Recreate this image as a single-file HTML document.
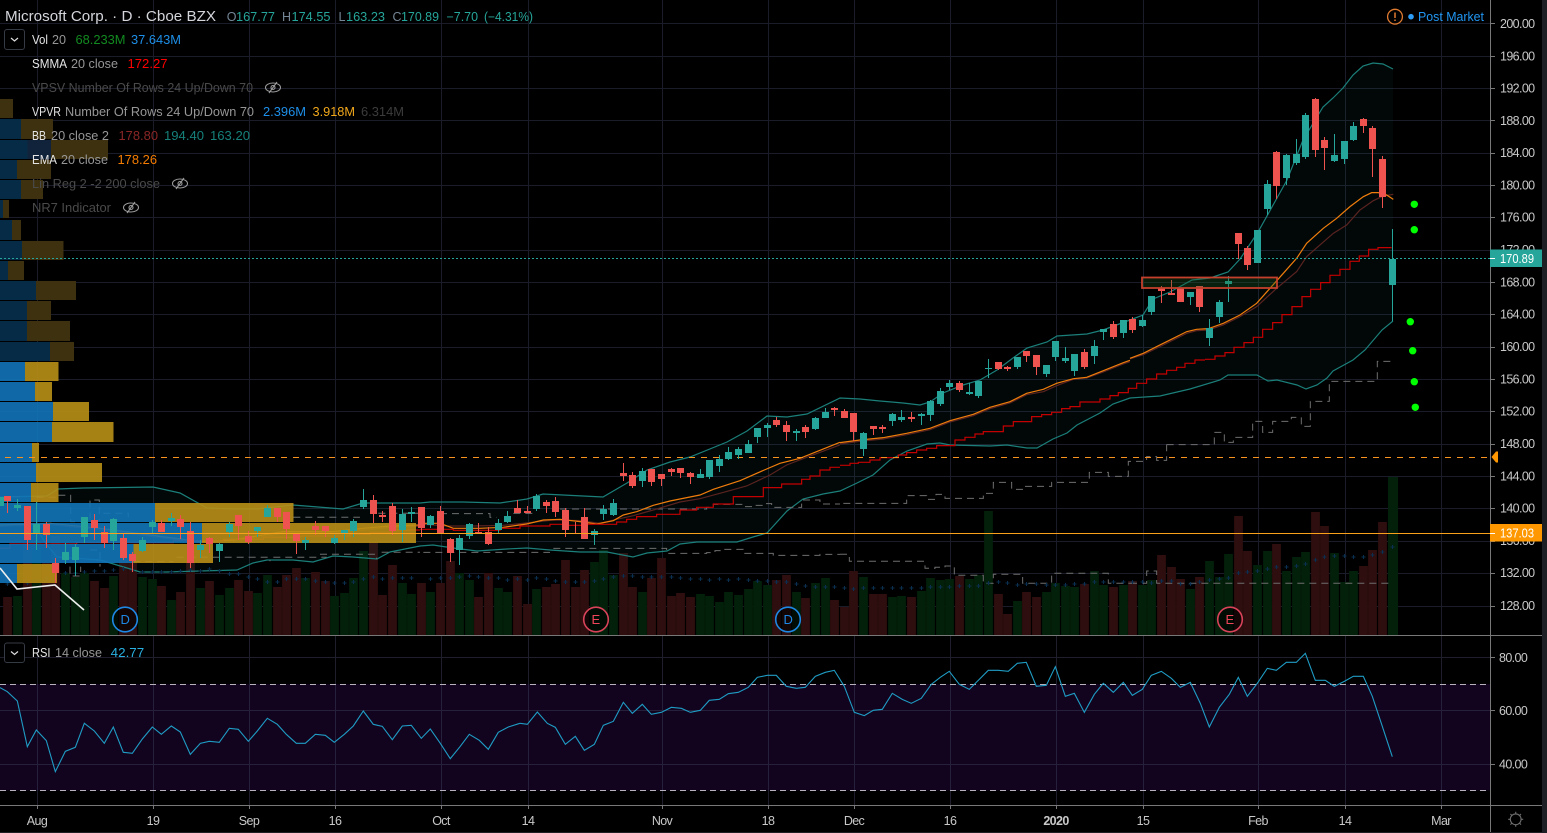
<!DOCTYPE html>
<html><head><meta charset="utf-8"><title>MSFT chart</title>
<style>
html,body{margin:0;padding:0;background:#000;width:1547px;height:833px;overflow:hidden}
svg{display:block}
text{font-family:"Liberation Sans","DejaVu Sans",sans-serif;font-size:12.5px}
.n{vector-effect:non-scaling-stroke;fill:none}
.ax text{fill:#c8c8c8;font-size:12.5px;letter-spacing:-.62px}
</style></head><body>
<svg width="1547" height="833" viewBox="0 0 1547 833" xmlns="http://www.w3.org/2000/svg">
<defs>
<marker id="p" markerUnits="userSpaceOnUse" markerWidth="6" markerHeight="6" refX="3" refY="3"><path d="M1 3H5M3 1V5" stroke="#0a2f50" stroke-width="1" fill="none"/></marker>
</defs>
<rect width="1547" height="833" fill="#000"/>
<!-- grid -->
<path stroke="#1a1c29" stroke-width="1" fill="none" d="M0 23.5H1490M0 56.5H1490M0 88.5H1490M0 120.5H1490M0 153.5H1490M0 185.5H1490M0 217.5H1490M0 250.5H1490M0 282.5H1490M0 314.5H1490M0 347.5H1490M0 379.5H1490M0 411.5H1490M0 444.5H1490M0 476.5H1490M0 508.5H1490M0 541.5H1490M0 573.5H1490M0 606.5H1490M37.5 0V635M153.5 0V635M249.5 0V635M335.5 0V635M441.5 0V635M528.5 0V635M662.5 0V635M768.5 0V635M854.5 0V635M950.5 0V635M1056.5 0V635M1143.5 0V635M1258.5 0V635M1345.5 0V635M1441.5 0V635"/>
<!-- volume -->
<path stroke="#2e0e0e" stroke-width="8.8" fill="none" d="M7.5 597V635M27.5 543V635M46.5 563V635M55.5 536V635M94.5 581V635M104.5 588V635M123.5 560V635M132.5 562V635M161.5 586V635M180.5 592V635M190.5 560V635M209.5 581V635M238.5 580V635M248.5 591V635M277.5 587V635M286.5 575V635M296.5 568V635M315.5 572V635M325.5 581V635M373.5 542V635M382.5 595V635M392.5 565V635M421.5 583V635M440.5 583V635M450.5 561V635M478.5 597V635M488.5 573V635M517.5 576V635M527.5 604V635M546.5 587V635M555.5 584V635M565.5 560V635M575.5 587V635M584.5 570V635M623.5 553V635M632.5 587V635M651.5 578V635M661.5 558V635M671.5 596V635M680.5 593V635M690.5 597V635M776.5 580V635M786.5 575V635M805.5 598V635M834.5 600V635M844.5 607V635M853.5 571V635M873.5 594V635M882.5 594V635M911.5 597V635M959.5 576V635M998.5 594V635M1007.5 614V635M1026.5 592V635M1036.5 597V635M1084.5 584V635M1113.5 587V635M1132.5 581V635M1161.5 555V635M1171.5 567V635M1180.5 579V635M1199.5 577V635M1238.5 516V635M1247.5 551V635M1276.5 544V635M1315.5 512V635M1324.5 526V635M1363.5 566V635M1372.5 550V635M1382.5 522V635"/>
<path stroke="#03200a" stroke-width="8.8" fill="none" d="M17.5 596V635M36.5 542V635M65.5 573V635M75.5 577V635M84.5 573V635M113.5 576V635M142.5 577V635M152.5 579V635M171.5 600V635M200.5 588V635M219.5 595V635M229.5 588V635M257.5 593V635M267.5 575V635M305.5 578V635M334.5 596V635M344.5 593V635M353.5 578V635M363.5 551V635M402.5 583V635M411.5 594V635M430.5 592V635M459.5 573V635M469.5 580V635M498.5 588V635M507.5 592V635M536.5 589V635M594.5 562V635M603.5 550V635M613.5 575V635M642.5 592V635M700.5 594V635M709.5 596V635M719.5 602V635M728.5 592V635M738.5 595V635M748.5 589V635M757.5 581V635M767.5 585V635M796.5 592V635M815.5 583V635M825.5 578V635M863.5 577V635M892.5 597V635M901.5 596V635M921.5 591V635M930.5 578V635M940.5 580V635M949.5 579V635M969.5 579V635M978.5 575V635M988.5 511V635M1017.5 601V635M1046.5 592V635M1055.5 583V635M1065.5 586V635M1074.5 587V635M1094.5 571V635M1103.5 585V635M1123.5 585V635M1142.5 585V635M1151.5 580V635M1190.5 589V635M1209.5 561V635M1219.5 577V635M1228.5 554V635M1257.5 565V635M1267.5 551V635M1286.5 571V635M1296.5 557V635M1305.5 552V635M1334.5 553V635M1344.5 582V635M1353.5 571V635"/>
<rect x="1388" y="477" width="10" height="158" fill="#03200a"/>
<!-- BB fill -->
<polygon fill="#26a69a" fill-opacity=".05" points="0,497 47,496 58,489 83,488 153,487 180,493 207,508 233,509 257,509 293,505 343,509 363,503 420,503 430,502 450,502 463,502 500,503 527,499 543,494 563,495 603,497 627,483 647,470 670,462 690,457 727,442 747,431 767,416 787,417 807,414 840,398 860,399 880,401 903,403 920,405 930,402 943,393 963,385 980,380 997,370 1013,358 1027,348 1047,342 1057,336 1087,334 1103,330 1130,320 1143,315 1153,299 1170,292 1192,280 1210,278 1228,272 1240,259 1258,232 1277,198 1287,180 1303,140 1323,107 1333,98 1343,88 1353,75 1363,66 1373,63 1383,64 1393,69 1393,321 1382,330 1365,350 1353,360 1333,371 1327,378 1317,385 1306,389 1297,385 1277,380 1268,381 1257,375 1228,375 1220,380 1190,389 1160,396 1130,398 1113,404 1100,413 1077,425 1067,433 1053,439 1037,448 1027,448 1007,445 990,446 950,445 940,443 927,444 907,451 890,460 873,475 857,483 840,491 823,494 803,499 787,511 767,533 753,537 737,542 697,542 680,544 667,551 647,553 633,557 607,552 580,552 550,550 527,548 507,549 477,551 453,548 433,545 420,546 390,552 377,559 353,557 333,556 313,562 293,560 267,560 253,563 237,570 200,571 167,572 140,572 127,568 100,560 57,557 47,545 33,524 0,525"/>
<!-- BB lines -->
<g fill="none" stroke="#1b7f7a" stroke-width="1.2">
<polyline points="0,497 47,496 58,489 83,488 153,487 180,493 207,508 233,509 257,509 293,505 343,509 363,503 420,503 430,502 450,502 463,502 500,503 527,499 543,494 563,495 603,497 627,483 647,470 670,462 690,457 727,442 747,431 767,416 787,417 807,414 840,398 860,399 880,401 903,403 920,405 930,402 943,393 963,385 980,380 997,370 1013,358 1027,348 1047,342 1057,336 1087,334 1103,330 1130,320 1143,315 1153,299 1170,292 1192,280 1210,278 1228,272 1240,259 1258,232 1277,198 1287,180 1303,140 1323,107 1333,98 1343,88 1353,75 1363,66 1373,63 1383,64 1393,69"/>
<polyline points="1393,321 1382,330 1365,350 1353,360 1333,371 1327,378 1317,385 1306,389 1297,385 1277,380 1268,381 1257,375 1228,375 1220,380 1190,389 1160,396 1130,398 1113,404 1100,413 1077,425 1067,433 1053,439 1037,448 1027,448 1007,445 990,446 950,445 940,443 927,444 907,451 890,460 873,475 857,483 840,491 823,494 803,499 787,511 767,533 753,537 737,542 697,542 680,544 667,551 647,553 633,557 607,552 580,552 550,550 527,548 507,549 477,551 453,548 433,545 420,546 390,552 377,559 353,557 333,556 313,562 293,560 267,560 253,563 237,570 200,571 167,572 140,572 127,568 100,560 57,557 47,545 33,524 0,525"/>
</g>
<!-- grey stepped -->
<g stroke="#6e6e6e" stroke-width="1" stroke-dasharray="7 5" fill="none">
<path class="n" transform="translate(0,220) scale(.3333)" d="M40 830H70M110 832H170M175 826H212V905H270V840H298V905M310 880H385V892M880 892H1080M1135 880H1260M270 990H300V1040M210 1040V1068H242V1040M960 1003H1130V1017M1145 997H1260M530 1012H810V1024M820 1012H980M400 1025H520"/>
<path class="n" transform="translate(420,400) scale(.3333)" d="M60 341H210V352H230M280 340H345M420 327H860V322H880V313H970V320H1000V316H1030V311H1055V322H1145V300H1200V312H1260M10 457H390M400 445H740V460H860V458H885V452H910V448H970V460H1060V466H1200V463H1260"/>
<path class="n" transform="translate(840,300) scale(.3333)" d="M10 610H200V587H260V598H288V583H315V595H430V580H460V547H515V568H550V559H635V547H748V517H805V529H865V484H920V470H950V481H980V433M0 763H28V784H255V805H285V802H315V798H343V826H430V850H460V823H548V850H635V820H805V850H870"/>
<path class="n" transform="translate(1130,350) scale(.3333)" d="M110 284H253V247H283V277H310V262H368V214H398V247H428V214H484V202H514V229H541V154H598V94H742V34H790M0 700H50V663H80V700H790"/>
</g>
<!-- basis -->
<g stroke="#5a2320" stroke-width="1.2" fill="none">
<polyline class="n" transform="translate(0,220) scale(.3333)" points="0,919 150,914 300,929 450,949 600,968 700,964 790,950 850,939 1000,939 1090,930 1170,922 1260,919"/>
<polyline class="n" transform="translate(420,400) scale(.3333)" points="0,372 80,378 160,378 250,376 330,368 400,360 480,362 540,370 590,358 640,347 700,330 780,306 840,296 900,280 980,258 1050,225 1100,195 1160,172 1260,135"/>
<polyline class="n" transform="translate(840,300) scale(.3333)" points="0,432 60,424 130,417 200,404 270,389 330,366 400,347 450,326 510,309 560,284 610,275 650,257 700,238 740,234 790,216 850,192 870,185"/>
<polyline class="n" transform="translate(1130,60) scale(.3333)" points="0,897 40,884 90,860 130,840 170,820 200,812 235,810 280,795 330,770 380,740 440,685 500,635 530,590 570,555 610,520 650,495 690,450 730,422 760,408 790,403"/>
</g>
<!-- EMA -->
<g stroke="#ef7d0c" stroke-width="1.2" fill="none">
<polyline class="n" transform="translate(0,220) scale(.3333)" points="0,915 150,910 300,925 450,945 600,965 700,960 790,945 850,935 1000,935 1090,925 1170,918 1260,915"/>
<polyline class="n" transform="translate(420,400) scale(.3333)" points="0,370 60,370 100,385 180,385 250,382 320,372 370,360 420,358 480,365 530,372 580,362 610,345 650,335 700,316 750,303 840,285 880,268 960,242 1040,207 1080,190 1140,175 1260,127"/>
<polyline class="n" transform="translate(840,300) scale(.3333)" points="0,428 60,420 130,413 200,400 270,385 330,362 400,343 450,322 510,305 560,280 610,268 650,250 700,236 740,232 790,212 850,188 870,181"/>
<polyline class="n" transform="translate(1130,60) scale(.3333)" points="0,895 40,880 90,855 130,835 170,815 200,808 235,806 280,790 330,765 380,730 420,685 460,640 500,595 530,550 580,505 620,475 660,440 700,410 725,398 745,398 770,405 790,418"/>
</g>
<!-- SMMA -->
<g stroke="#c40000" stroke-width="1.2" fill="none">
<path class="n" transform="translate(0,220) scale(.3333)" d="M0 985H30V972H230V968H520V962H670V958H790V952H900V948H1050V943H1110V937H1175V930H1260"/>
<path class="n" transform="translate(420,400) scale(.3333)" d="M0 388H100V391H240V385H300V378H390V373H440V376H500V373H590V366H620V358H650V350H710V343H780V330H830V322H880V312H940V290H1030V263H1085V252H1145V238H1170V228H1200V210H1230V202H1260"/>
<path class="n" transform="translate(840,300) scale(.3333)" d="M0 496H30V490H55V487H90V480H120V473H175V465H200V458H230V450H260V445H290V437H345V420H375V412H405V402H430V395H490V378H520V365H575V350H605V344H635V337H665V326H690V320H720V306H780V297H810V287H835V278H865V265H890V250H920V237H950V222H980V211H1010V202H1035V190H1065V180H1095"/>
<path class="n" transform="translate(1130,60) scale(.3333)" d="M225 898H255V888H285V878H312V862H342V848H370V832H398V808H428V788H456V764H486V740H516V710H542V688H572V668H600V646H630V628H660V604H688V588H716V568H744V563H785"/>
</g>
<!-- Vol MA crosses -->
<polyline fill="none" stroke="none" marker-start="url(#p)" marker-mid="url(#p)" marker-end="url(#p)" points="7.5,584 27.5,583 46.5,578 65.5,573 75.5,573 84.5,572 94.5,571 104.5,571 113.5,570 123.5,569 132.5,570 142.5,572 152.5,572 161.5,572 171.5,572 180.5,571 190.5,570 200.5,571 209.5,569 219.5,571 229.5,574 238.5,574 248.5,577 257.5,579 267.5,582 277.5,582 286.5,579 296.5,579 305.5,579 315.5,581 325.5,582 334.5,583 344.5,583 353.5,582 363.5,579 373.5,577 382.5,579 392.5,578 402.5,578 411.5,578 430.5,579 440.5,578 450.5,578 459.5,577 469.5,576 478.5,577 488.5,578 498.5,578 507.5,580 517.5,579 527.5,580 536.5,578 546.5,579 555.5,581 565.5,582 575.5,582 584.5,582 594.5,581 603.5,579 613.5,577 623.5,576 632.5,576 642.5,577 651.5,577 661.5,577 671.5,577 680.5,578 690.5,579 700.5,579 709.5,580 719.5,579 728.5,580 738.5,579 748.5,580 757.5,581 767.5,581 776.5,582 786.5,582 796.5,584 805.5,586 815.5,587 825.5,587 834.5,587 844.5,588 853.5,589 863.5,588 873.5,588 882.5,588 892.5,588 901.5,588 911.5,588 921.5,588 930.5,587 940.5,587 949.5,587 959.5,586 969.5,586 978.5,586 988.5,583 998.5,582 1007.5,583 1017.5,585 1026.5,584 1036.5,584 1046.5,585 1055.5,585 1065.5,585 1074.5,584 1084.5,584 1094.5,582 1103.5,582 1113.5,582 1123.5,582 1132.5,582 1142.5,582 1151.5,583 1161.5,581 1171.5,581 1180.5,584 1190.5,584 1199.5,582 1209.5,580 1219.5,579 1228.5,578 1238.5,573 1247.5,572 1257.5,571 1267.5,569 1276.5,567 1286.5,567 1296.5,566 1305.5,564 1315.5,560 1324.5,557 1334.5,556 1344.5,556 1353.5,557 1363.5,557 1372.5,555 1382.5,552 1392.5,547"/>
<!-- VPVR dim -->
<g fill="#3e3110">
<rect x="0" y="99" width="13" height="19"/><rect x="21" y="119" width="32" height="20"/><rect x="51" y="140" width="57" height="19"/><rect x="17" y="160" width="34" height="19"/><rect x="21" y="180" width="22" height="19"/><rect x="3" y="200" width="6" height="18"/><rect x="12" y="220" width="9" height="20"/><rect x="22" y="241" width="41.5" height="19"/><rect x="8" y="261" width="16" height="19"/><rect x="36" y="281" width="40" height="19"/><rect x="27" y="301" width="24" height="19"/><rect x="27" y="321" width="43" height="20"/><rect x="50" y="342" width="24" height="19"/>
</g>
<g fill="#062b47">
<rect y="119" width="21" height="20"/><rect y="140" width="27.5" height="19"/><rect y="160" width="17" height="19"/><rect y="180" width="21" height="19"/><rect y="200" width="3" height="18"/><rect y="220" width="12" height="20"/><rect y="241" width="22" height="19"/><rect y="261" width="8" height="19"/><rect y="281" width="36" height="19"/><rect y="301" width="27" height="19"/><rect y="321" width="27" height="20"/><rect y="342" width="50" height="19"/>
</g>
<rect x="27.5" y="140" width="23.5" height="19" fill="#11233a"/>
<!-- VPVR bright -->
<g opacity=".9">
<g fill="#b98f17">
<rect x="25" y="362" width="33.5" height="19"/><rect x="35" y="382" width="17" height="19"/><rect x="53" y="402" width="36" height="19"/><rect x="52" y="422" width="61.5" height="20"/><rect x="32" y="443" width="7" height="19"/><rect x="36" y="463" width="66" height="19"/><rect x="31" y="483" width="27.5" height="19"/><rect x="155" y="503" width="138.5" height="19"/><rect x="202" y="523" width="214" height="20"/><rect x="133.5" y="544" width="79.5" height="19"/><rect x="17" y="564" width="40" height="19"/>
</g>
<g fill="#1275b8">
<rect y="362" width="25" height="19"/><rect y="382" width="35" height="19"/><rect y="402" width="53" height="19"/><rect y="422" width="52" height="20"/><rect y="443" width="32" height="19"/><rect y="463" width="36" height="19"/><rect y="483" width="31" height="19"/><rect y="503" width="155" height="19"/><rect y="523" width="202" height="20"/><rect y="544" width="133.5" height="19"/><rect y="564" width="17" height="19"/>
</g>
</g>
<!-- horizontal levels -->
<line x1="0" x2="1490" y1="258.5" y2="258.5" stroke="#26a69a" stroke-dasharray="2 2"/>
<line x1="5" x2="1490" y1="457.5" y2="457.5" stroke="#f7931e" stroke-dasharray="6 6"/>
<!-- candle wicks -->
<path stroke="#ef5350" stroke-width="1" fill="none" d="M7.5 496V513M27.5 506V550M46.5 522V548M55.5 558V583M94.5 514V540M104.5 526V548M123.5 533V560M132.5 552V572M161.5 520V532M180.5 515V539M190.5 522V568M209.5 537V553M238.5 515V540M248.5 531V544M277.5 508V522M286.5 512V539M296.5 534V554M315.5 521V535M325.5 526V537M373.5 495V523M382.5 511V522M392.5 503V535M421.5 507V537M440.5 506V533M450.5 538V562M478.5 523V534M488.5 527V545M517.5 500V513M527.5 506V513M546.5 500V513M555.5 497V517M565.5 508V537M575.5 522V533M584.5 508V539M623.5 463V481M632.5 472V488M651.5 469V486M661.5 474V486M671.5 468V476M680.5 468V478M690.5 472V484M776.5 417V427M786.5 421V441M805.5 425V438M834.5 407V416M844.5 409V418M853.5 413V441M873.5 426V435M882.5 425V433M911.5 412V422M959.5 381V392M998.5 362V370M1007.5 366V371M1026.5 351V362M1036.5 355V375M1084.5 349V369M1113.5 321V339M1132.5 317V333M1161.5 286V303M1171.5 280V295M1180.5 288V302M1199.5 286V312M1238.5 233V259M1247.5 246V270M1276.5 151V199M1315.5 98V157M1324.5 137V170M1363.5 118V133M1372.5 126V177M1382.5 156V208"/>
<path stroke="#26a69a" stroke-width="1" fill="none" d="M17.5 499V511M36.5 502V550M65.5 543V564M75.5 544V576M84.5 517V543M113.5 518V550M142.5 537V552M152.5 520V534M171.5 513V526M200.5 540V558M219.5 543V562M229.5 522V537M257.5 527V537M267.5 505V517M305.5 537V550M334.5 535V544M344.5 530V540M353.5 519V537M363.5 489V509M402.5 509V542M411.5 507V522M430.5 515V528M459.5 535V565M469.5 523V539M498.5 519V534M507.5 511V523M536.5 494V511M594.5 529V545M603.5 505V520M613.5 499V516M642.5 468V487M700.5 469V478M709.5 460V479M719.5 455V472M728.5 447V460M738.5 447V459M748.5 440V453M757.5 428V443M767.5 423V437M796.5 429V441M815.5 417V430M825.5 408V418M863.5 432V456M892.5 413V426M901.5 410V422M921.5 413V425M930.5 400V421M940.5 388V406M949.5 380V390M969.5 383V395M978.5 381V398M988.5 359V378M1017.5 357V369M1046.5 365V377M1055.5 341V361M1065.5 347V363M1074.5 354V376M1094.5 340V364M1103.5 329V340M1123.5 320V338M1142.5 315V327M1151.5 296V315M1190.5 292V305M1209.5 319V346M1219.5 300V323M1228.5 276V302M1257.5 230V263M1267.5 180V215M1286.5 154V185M1296.5 139V165M1305.5 113V159M1334.5 134V162M1344.5 141V164M1353.5 122V141M1392.5 229V321"/>
<!-- candle bodies -->
<path stroke="#ef5350" stroke-width="7" fill="none" d="M7.5 496V501M27.5 506V540M46.5 524V535M55.5 563V573M94.5 520V528M104.5 532V543M123.5 538V558M132.5 554V561M161.5 523V532M180.5 519V527M190.5 531V563M209.5 538V544M238.5 515V526M248.5 536V542M277.5 508V517M286.5 512V529M296.5 534V541M315.5 526V530M325.5 526V531M373.5 500V514M382.5 515V517M392.5 506V531M421.5 507V528M440.5 511V533M450.5 539V553M478.5 532V534M488.5 532V544M517.5 508V513M527.5 511V513M546.5 502V506M555.5 501V512M565.5 510V530M584.5 517V539M623.5 473V476M632.5 475V486M651.5 469V482M661.5 474V479M671.5 469V472M680.5 468V473M690.5 473V477M776.5 420V425M786.5 425V432M805.5 427V432M834.5 408V410M844.5 411V418M853.5 413V432M873.5 426V429M882.5 427V429M911.5 417V419M959.5 383V390M998.5 362V369M1007.5 367V369M1026.5 351V356M1036.5 355V367M1084.5 352V367M1113.5 324V337M1132.5 319V330M1161.5 288V291M1171.5 293V295M1180.5 288V302M1199.5 286V307M1238.5 233V244M1247.5 248V265M1276.5 152V186M1315.5 99V150M1324.5 140V148M1363.5 119V126M1372.5 128V149M1382.5 159V197"/>
<path stroke="#26a69a" stroke-width="7" fill="none" d="M.5 497V506M17.5 505V508M36.5 524V534M65.5 552V560M75.5 547V560M84.5 517V537M113.5 519V541M142.5 540V551M152.5 522V527M171.5 518V521M200.5 545V550M219.5 544V551M229.5 524V532M257.5 527V531M267.5 508V517M305.5 540V543M334.5 538V543M344.5 530V534M353.5 521V531M363.5 500V507M402.5 514V530M411.5 512V514M430.5 516V525M459.5 538V550M469.5 524V536M498.5 523V530M507.5 516V522M536.5 496V509M594.5 531V535M603.5 509V514M613.5 503V515M642.5 471V481M700.5 474V478M709.5 460V477M719.5 459V466M728.5 452V459M738.5 449V455M748.5 444V453M757.5 428V437M767.5 425V428M796.5 431V433M815.5 418V429M825.5 412V418M863.5 433V449M892.5 414V421M901.5 417V420M921.5 414V416M930.5 401V415M940.5 391V404M949.5 383V387M969.5 392V394M978.5 381V396M988.5 368V369M1017.5 357V367M1046.5 365V374M1055.5 341V357M1065.5 358V361M1074.5 354V371M1094.5 346V356M1103.5 329V332M1123.5 320V333M1142.5 320V326M1151.5 296V312M1190.5 292V297M1209.5 328V338M1219.5 302V317M1228.5 281V284M1257.5 230V263M1267.5 184V209M1286.5 155V178M1296.5 154V163M1305.5 115V157M1334.5 155V161M1344.5 141V159M1353.5 126V140M1392.5 259V285"/>
<!-- orange line -->
<line x1="0" x2="1490" y1="533.5" y2="533.5" stroke="#f9a11b" stroke-width="1"/>
<!-- white line -->
<polyline points="0,568 17,589 55,585 84,610" fill="none" stroke="#eee" stroke-width="1.6"/>
<!-- rectangle -->
<rect x="1142" y="277.5" width="135" height="10.5" fill="#1e5a1e" fill-opacity=".3" stroke="#c4402c" stroke-width="1.8"/>
<!-- dots -->
<g fill="#00ff00"><circle cx="1414.3" cy="204.3" r="3.7"/><circle cx="1414.3" cy="229.7" r="3.7"/><circle cx="1410.3" cy="321.7" r="3.7"/><circle cx="1412.7" cy="350.7" r="3.7"/><circle cx="1414.3" cy="381.7" r="3.7"/><circle cx="1415.3" cy="407.3" r="3.7"/></g>
<!-- earnings/dividend -->
<g fill="#00000099" stroke-width="1.6">
<circle cx="125" cy="619.5" r="12.3" stroke="#1e88e5"/><circle cx="596" cy="619.5" r="12.3" stroke="#d9435a"/><circle cx="788" cy="619.5" r="12.3" stroke="#1e88e5"/><circle cx="1230" cy="619.5" r="12.3" stroke="#d9435a"/>
</g>
<g><text x="120.5" y="624" fill="#1e88e5" style="font-size:13px">D</text><text x="591.5" y="624" fill="#f0445a" style="font-size:13px">E</text><text x="783.5" y="624" fill="#1e88e5" style="font-size:13px">D</text><text x="1225.5" y="624" fill="#f0445a" style="font-size:13px">E</text></g>
<!-- legend -->
<text x="5" y="21" fill="#d4d6dc" style="font-size:15px" textLength="211" lengthAdjust="spacingAndGlyphs">Microsoft Corp. · D · Cboe BZX</text>
<g>
<text x="226.8" y="21" fill="#758696">O</text><text x="236" y="21" fill="#26a69a" textLength="39" lengthAdjust="spacingAndGlyphs">167.77</text>
<text x="282" y="21" fill="#758696">H</text><text x="291.5" y="21" fill="#26a69a" textLength="39" lengthAdjust="spacingAndGlyphs">174.55</text>
<text x="338.5" y="21" fill="#758696">L</text><text x="346" y="21" fill="#26a69a" textLength="39" lengthAdjust="spacingAndGlyphs">163.23</text>
<text x="392.5" y="21" fill="#758696">C</text><text x="401" y="21" fill="#26a69a" textLength="38" lengthAdjust="spacingAndGlyphs">170.89</text>
<text x="446.5" y="21" fill="#26a69a" textLength="31.5" lengthAdjust="spacingAndGlyphs">−7.70</text>
<text x="484" y="21" fill="#26a69a" textLength="49" lengthAdjust="spacingAndGlyphs">(−4.31%)</text>
</g>
<rect x="4.5" y="29.5" width="20" height="20" rx="2.5" fill="#000" stroke="#363a45"/>
<path d="M11 38L14.5 41L18 38" fill="none" stroke="#ddd" stroke-width="1.2"/>
<text x="32" y="44" fill="#e4e4e4" textLength="16" lengthAdjust="spacingAndGlyphs">Vol</text><text x="52" y="44" fill="#969696" textLength="14" lengthAdjust="spacingAndGlyphs">20</text>
<text x="75.5" y="44" fill="#128a20" textLength="50" lengthAdjust="spacingAndGlyphs">68.233M</text>
<text x="131" y="44" fill="#1e8fe8" textLength="50" lengthAdjust="spacingAndGlyphs">37.643M</text>
<text x="32" y="68" fill="#e4e4e4" textLength="35" lengthAdjust="spacingAndGlyphs">SMMA</text><text x="71" y="68" fill="#969696" textLength="47" lengthAdjust="spacingAndGlyphs">20 close</text>
<text x="127.5" y="68" fill="#ff0000" textLength="40" lengthAdjust="spacingAndGlyphs">172.27</text>
<text x="32" y="92" fill="#4a4a4a" textLength="221" lengthAdjust="spacingAndGlyphs">VPSV Number Of Rows 24 Up/Down 70</text>
<text x="32" y="116" fill="#e4e4e4" textLength="29" lengthAdjust="spacingAndGlyphs">VPVR</text><text x="65" y="116" fill="#969696" textLength="189" lengthAdjust="spacingAndGlyphs">Number Of Rows 24 Up/Down 70</text>
<text x="263" y="116" fill="#1e8fe8" textLength="43" lengthAdjust="spacingAndGlyphs">2.396M</text>
<text x="312.5" y="116" fill="#f2a81b" textLength="42.5" lengthAdjust="spacingAndGlyphs">3.918M</text>
<text x="361" y="116" fill="#3c3c3c" textLength="43" lengthAdjust="spacingAndGlyphs">6.314M</text>
<text x="32" y="140" fill="#e4e4e4" textLength="14" lengthAdjust="spacingAndGlyphs">BB</text><text x="51" y="140" fill="#969696" textLength="58" lengthAdjust="spacingAndGlyphs">20 close 2</text>
<text x="118.5" y="140" fill="#8a2626" textLength="39.5" lengthAdjust="spacingAndGlyphs">178.80</text>
<text x="164" y="140" fill="#16807a" textLength="40" lengthAdjust="spacingAndGlyphs">194.40</text>
<text x="210" y="140" fill="#16807a" textLength="40" lengthAdjust="spacingAndGlyphs">163.20</text>
<text x="32" y="164" fill="#e4e4e4" textLength="25" lengthAdjust="spacingAndGlyphs">EMA</text><text x="61" y="164" fill="#969696" textLength="47" lengthAdjust="spacingAndGlyphs">20 close</text>
<text x="117.5" y="164" fill="#f57c00" textLength="39.5" lengthAdjust="spacingAndGlyphs">178.26</text>
<text x="32" y="188" fill="#4a4a4a" textLength="128" lengthAdjust="spacingAndGlyphs">Lin Reg 2 -2 200 close</text>
<text x="32" y="212" fill="#4a4a4a" textLength="79" lengthAdjust="spacingAndGlyphs">NR7 Indicator</text>
<g fill="none" stroke="#9a9a9a" stroke-width="1.1">
<g transform="translate(273,87.5)"><ellipse rx="7.5" ry="4.5"/><circle r="2"/><path d="M-4 5.5L4 -5.5"/></g>
<g transform="translate(180,183.5)"><ellipse rx="7.5" ry="4.5"/><circle r="2"/><path d="M-4 5.5L4 -5.5"/></g>
<g transform="translate(131,207.5)"><ellipse rx="7.5" ry="4.5"/><circle r="2"/><path d="M-4 5.5L4 -5.5"/></g>
</g>
<!-- post market -->
<circle cx="1395" cy="16.7" r="7.4" fill="none" stroke="#e07b30" stroke-width="1.3"/>
<path d="M1395 12.5V18M1395 19.5V21" stroke="#e07b30" stroke-width="1.5"/>
<circle cx="1411" cy="16.7" r="2.8" fill="#2e9cf5"/>
<text x="1418" y="21" fill="#2196f3" textLength="66" lengthAdjust="spacingAndGlyphs">Post Market</text>
<!-- RSI pane -->
<rect x="0" y="684" width="1490" height="106.5" fill="#12041f"/>
<path stroke="#3c3c5a" stroke-opacity=".5" fill="none" d="M0 657.5H1490M0 710.5H1490M0 764.5H1490M37.5 635V805M153.5 635V805M249.5 635V805M335.5 635V805M441.5 635V805M528.5 635V805M662.5 635V805M768.5 635V805M854.5 635V805M950.5 635V805M1056.5 635V805M1143.5 635V805M1258.5 635V805M1345.5 635V805M1441.5 635V805"/>
<path stroke="#b8b2bd" stroke-dasharray="6 4" fill="none" d="M0 684.5H1490M0 790.5H1490"/>
<g stroke="#1f9cc4" stroke-width="1.1" fill="none">
<polyline class="n" transform="translate(0,635) scale(.3333)" points="0,158 22,170 52,198 82,335 109,285 139,317 166,410 196,349 226,337 253,265 283,288 313,325 340,276 370,352 397,355 427,312 457,276 484,298 514,273 541,291 571,358 601,325 628,319 658,322 688,280 715,283 745,319 772,288 802,250 832,268 859,298 889,325 916,325 946,298 976,301 1003,322 1033,298 1060,273 1090,228 1120,268 1147,274 1177,314 1207,273 1234,271 1264,310 1291,282 1321,325 1351,371 1381,334 1408,298 1438,316 1465,343 1495,292 1525,276 1560,265"/>
<polyline class="n" transform="translate(520,635) scale(.3333)" points="0,265 22,268 52,231 82,265 106,277 136,328 166,304 193,346 223,328 250,271 280,259 310,202 337,235 367,208 394,238 424,232 454,217 484,220 511,232 541,226 568,196 598,193 625,176 655,172 685,157 712,127 742,121 769,121 799,154 829,160 856,157 886,124 916,112 943,106 973,154 1003,232 1033,242 1060,226 1087,223 1117,175 1147,193 1174,205 1204,190 1234,148 1261,127 1288,109 1318,148 1348,163 1378,133 1405,106 1435,106 1465,109 1492,85 1519,82 1530,108"/>
<polyline class="n" transform="translate(1030,635) scale(.3333)" points="0,108 19,154 49,151 76,95 106,184 133,175 163,232 193,178 220,145 250,172 280,142 307,181 337,163 364,121 394,109 424,130 451,157 481,142 511,205 538,276 568,217 598,178 625,127 652,184 682,145 712,100 739,106 769,82 799,82 826,55 856,136 886,136 913,154 943,139 970,124 1000,124 1027,184 1057,274 1087,365"/>
</g>
<rect x="4.5" y="643" width="20" height="19.5" rx="2.5" fill="#000" stroke="#363a45"/>
<path d="M11 651.5L14.5 654.5L18 651.5" fill="none" stroke="#ddd" stroke-width="1.2"/>
<text x="32" y="657" fill="#e4e4e4" textLength="18.5" lengthAdjust="spacingAndGlyphs">RSI</text>
<text x="55" y="657" fill="#969696" textLength="47" lengthAdjust="spacingAndGlyphs">14 close</text>
<text x="110.7" y="657" fill="#29b0e0" textLength="33.5" lengthAdjust="spacingAndGlyphs">42.77</text>
<!-- frames -->
<rect x="1542" y="0" width="5" height="833" fill="#1d1f24"/>
<rect x="0" y="832" width="1547" height="1" fill="#1d1f24"/>
<rect x="1491" y="0" width="51" height="832" fill="#000"/>
<path stroke="#787878" fill="none" d="M1490.5 0V832M0 635.5H1542M0 805.5H1542"/>
<!-- axis ticks -->
<path stroke="#787878" fill="none" d="M1490 23.5h5M1490 56.5h5M1490 88.5h5M1490 120.5h5M1490 153.5h5M1490 185.5h5M1490 217.5h5M1490 250.5h5M1490 282.5h5M1490 314.5h5M1490 347.5h5M1490 379.5h5M1490 411.5h5M1490 444.5h5M1490 476.5h5M1490 508.5h5M1490 541.5h5M1490 573.5h5M1490 606.5h5M1490 657.5h5M1490 710.5h5M1490 764.5h5M37.5 805v4M153.5 805v4M249.5 805v4M335.5 805v4M441.5 805v4M528.5 805v4M662.5 805v4M768.5 805v4M854.5 805v4M950.5 805v4M1056.5 805v4M1143.5 805v4M1258.5 805v4M1345.5 805v4M1441.5 805v4"/>
<g class="ax" text-anchor="start">
<text x="1500" y="28">200.00</text><text x="1500" y="60.5">196.00</text><text x="1500" y="92.5">192.00</text><text x="1500" y="125">188.00</text><text x="1500" y="157">184.00</text><text x="1500" y="189.5">180.00</text><text x="1500" y="221.5">176.00</text><text x="1500" y="254">172.00</text><text x="1500" y="286.5">168.00</text><text x="1500" y="318.5">164.00</text><text x="1500" y="351">160.00</text><text x="1500" y="383.5">156.00</text><text x="1500" y="415.5">152.00</text><text x="1500" y="448">148.00</text><text x="1500" y="480.5">144.00</text><text x="1500" y="512.5">140.00</text><text x="1500" y="545">136.00</text><text x="1500" y="577">132.00</text><text x="1500" y="610">128.00</text>
<text x="1499" y="662">80.00</text><text x="1499" y="715">60.00</text><text x="1499" y="768.5">40.00</text>
</g>
<g class="ax" text-anchor="middle">
<text x="37" y="825">Aug</text><text x="153" y="825">19</text><text x="249" y="825">Sep</text><text x="335" y="825">16</text><text x="441" y="825">Oct</text><text x="528" y="825">14</text><text x="662" y="825">Nov</text><text x="768" y="825">18</text><text x="854" y="825">Dec</text><text x="950" y="825">16</text><text x="1056" y="825" style="font-weight:700">2020</text><text x="1143" y="825">15</text><text x="1258" y="825">Feb</text><text x="1345" y="825">14</text><text x="1441" y="825">Mar</text>
</g>
<!-- price tags -->
<rect x="1490" y="249.5" width="52" height="17.5" fill="#26a69a"/>
<path d="M1490 258.5h5" stroke="#fff"/>
<text x="1500" y="263" fill="#fff" textLength="34" lengthAdjust="spacingAndGlyphs">170.89</text>
<rect x="1490" y="524" width="52" height="17.5" fill="#ff9800"/>
<path d="M1490 533.5h5" stroke="#fff"/>
<text x="1500" y="537.5" fill="#fff" textLength="34" lengthAdjust="spacingAndGlyphs">137.03</text>
<path d="M1491.5 457L1496 451.5H1498V462.5H1496Z" fill="#ff9800"/>
<!-- gear -->
<g transform="translate(1515.7,819.3)" fill="none" stroke="#6e6e6e" stroke-width="1.1">
<circle r="5.4"/><path d="M0 -7.5V-5.4M0 5.4V7.5M-7.5 0H-5.4M5.4 0H7.5M-5.3 -5.3L-3.8 -3.8M3.8 3.8L5.3 5.3M5.3 -5.3L3.8 -3.8M-3.8 3.8L-5.3 5.3"/>
</g>
</svg>
</body></html>
